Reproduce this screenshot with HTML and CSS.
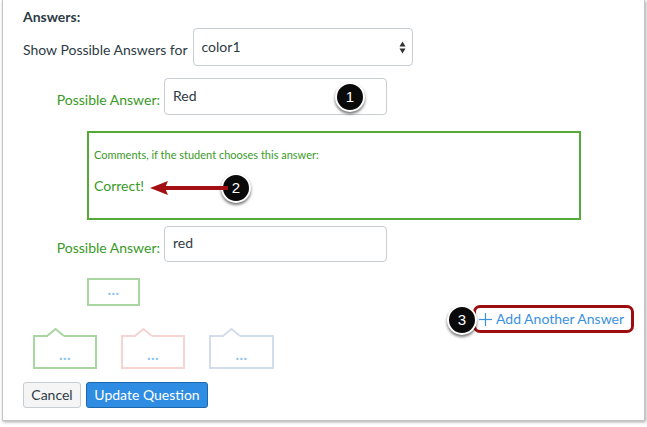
FILE: index.html
```html
<!DOCTYPE html>
<html>
<head>
<meta charset="utf-8">
<link rel="stylesheet" href="styles.css">
</head>
<body>
<div class="frame">
  <div class="title">Answers:</div>
  <div class="show-row">
    <span class="show-label">Show Possible Answers for</span>
    <div class="select">
      <span>color1</span>
      <svg class="sel-arrows" width="7" height="13" viewBox="0 0 7 13"><polygon points="0.5,5.5 3.5,0.5 6.5,5.5" fill="#333"/><polygon points="0.5,7.5 3.5,12.5 6.5,7.5" fill="#333"/></svg>
    </div>
  </div>
  <div class="answer-row first">
    <span class="answer-label">Possible Answer:</span>
    <input class="answer-input" type="text" value="Red">
  </div>
  <div class="comment-box">
    <div class="comment-title">Comments, if the student chooses this answer:</div>
    <div class="comment-text">Correct!</div>
  </div>
  <div class="answer-row second">
    <span class="answer-label">Possible Answer:</span>
    <input class="answer-input" type="text" value="red">
  </div>
  <div class="lower">
    <div class="lower-left">
      <div class="small-box">...</div>
      <div class="notch-row">
        <div class="nbox green"><svg class="notch" width="20" height="10" viewBox="0 0 20 10"><rect x="2" y="7" width="16" height="3" fill="#fff"/><polyline points="1,8 9.5,1 18,8" fill="#fff" stroke="#a9d5a1" stroke-width="2"/></svg>...</div>
        <div class="nbox pink"><svg class="notch" width="20" height="10" viewBox="0 0 20 10"><rect x="2" y="7" width="16" height="3" fill="#fff"/><polyline points="1,8 9.5,1 18,8" fill="#fff" stroke="#f7d3d3" stroke-width="2"/></svg>...</div>
        <div class="nbox blue"><svg class="notch" width="20" height="10" viewBox="0 0 20 10"><rect x="2" y="7" width="16" height="3" fill="#fff"/><polyline points="1,8 9.5,1 18,8" fill="#fff" stroke="#d3dcec" stroke-width="2"/></svg>...</div>
      </div>
    </div>
    <div class="add-answer">
      <svg class="plus" width="13" height="13" viewBox="0 0 13 13"><line x1="6.5" y1="0" x2="6.5" y2="13" stroke="#3a91df" stroke-width="1.2"/><line x1="0" y1="6.5" x2="13" y2="6.5" stroke="#3a91df" stroke-width="1.2"/></svg>
      <span>Add Another Answer</span>
    </div>
  </div>
  <div class="buttons">
    <button class="btn cancel">Cancel</button>
    <button class="btn primary">Update Question</button>
  </div>

  <div class="badge b1">1</div>
  <div class="badge b2">2</div>
  <div class="badge b3">3</div>
  <svg class="arrow" width="78" height="14" viewBox="0 0 78 14"><rect x="14" y="5" width="64" height="4" fill="#a30f12"/><polygon points="0,7 18,0 15,7 18,14" fill="#a30f12"/></svg>
</div>
</body>
</html>
```
FILE: styles.css
```css
* { box-sizing: border-box; }
html, body { margin: 0; padding: 0; background: #fff; }
body {
  font-family: Lato, "Liberation Sans", sans-serif;
  color: #2d3b45;
  width: 647px;
  height: 427px;
  overflow: hidden;
}
.frame {
  position: relative;
  margin-left: 2px;
  width: 643px;
  height: 421px;
  border: 1px solid #c4c4c4;
  border-top: none;
  box-shadow: 1px 1px 3px rgba(0,0,0,0.35);
  padding: 7px 10px 0 20px;
  background: #fff;
}
.title {
  font-weight: 700;
  font-size: 14px;
  line-height: 20px;
  height: 20px;
}
.show-row {
  margin-top: 1px;
  display: flex;
  align-items: center;
  height: 38px;
}
.show-label {
  font-size: 14px;
  line-height: 18px;
  padding-top: 5px;
  margin-right: 5px;
}
.select {
  width: 220px;
  height: 38px;
  border: 1px solid #c7cdd1;
  border-radius: 4px;
  display: flex;
  align-items: center;
  justify-content: space-between;
  padding: 0 6px 0 8px;
  font-size: 14px;
}
.select span { padding-bottom: 2px; }
.answer-row {
  display: flex;
  align-items: center;
}
.answer-row.first { margin-top: 12px; height: 37px; }
.answer-row.second { margin-top: 6px; height: 36px; }
.answer-label {
  width: 137px;
  text-align: right;
  color: #399a27;
  font-size: 14px;
  line-height: 18px;
  padding-top: 7px;
  margin-right: 4px;
}
.answer-input {
  width: 223px;
  height: 100%;
  border: 1px solid #c7cdd1;
  border-radius: 4px;
  font-family: Lato, "Liberation Sans", sans-serif;
  font-size: 14px;
  color: #2d3b45;
  padding: 0 8px 3px 8px;
  margin: 0;
  outline: none;
  background: #fff;
}
.comment-box {
  margin: 16px 0 0 64px;
  width: 494px;
  height: 89px;
  border: 2px solid #55a939;
  padding: 14px 0 0 5px;
  color: #399a27;
}
.comment-title {
  font-size: 11px;
  line-height: 15px;
}
.comment-text {
  margin-top: 15px;
  font-size: 14px;
  line-height: 18px;
}
.lower {
  margin-top: 16px;
  display: flex;
  align-items: flex-start;
}
.lower-left {
  display: flex;
  flex-direction: column;
}
.small-box {
  margin-left: 64px;
  width: 53px;
  height: 28px;
  border: 2px solid #a9d5a1;
  color: #8cc4f0;
  font-size: 15px;
  font-weight: 700;
  letter-spacing: 0.5px;
  line-height: 18px;
  text-align: center;
}
.notch-row {
  display: flex;
  gap: 24px;
  margin: 29px 0 0 10px;
}
.nbox {
  position: relative;
  width: 64px;
  height: 34px;
  border: 2px solid;
  color: #8cc4f0;
  font-size: 15px;
  font-weight: 700;
  letter-spacing: 0.5px;
  line-height: 14px;
  text-align: center;
  padding-top: 10px;
}
.nbox.green { border-color: #a9d5a1; }
.nbox.pink { border-color: #f7d3d3; }
.nbox.blue { border-color: #d3dcec; width: 65px; }
.notch {
  position: absolute;
  top: -9px;
  left: 11px;
}
.add-answer {
  margin: 27px 0 0 auto;
  width: 161px;
  height: 28px;
  border: 3px solid #9c0d10;
  border-radius: 7px;
  display: flex;
  align-items: center;
  padding-left: 3px;
  color: #3a91df;
  font-size: 14px;
}
.plus { margin-right: 4px; }
.add-answer span { padding-bottom: 1px; }
.buttons {
  margin-top: 13px;
  display: flex;
  gap: 5px;
}
.btn {
  height: 26px;
  font-family: Lato, "Liberation Sans", sans-serif;
  font-size: 14px;
  border-radius: 3px;
  padding: 0;
  margin: 0;
  line-height: 22px;
}
.btn.cancel {
  width: 58px;
  background: #f5f5f5;
  border: 1px solid #c7cdd1;
  color: #2d3b45;
}
.btn.primary {
  width: 122px;
  background: #2e8ce3;
  border: 1px solid #1d67ab;
  color: #fff;
}
.badge {
  position: absolute;
  width: 30px;
  height: 30px;
  border-radius: 50%;
  background: #0a0a0a;
  border: 2px solid #fff;
  box-shadow: 0 2px 3px rgba(0,0,0,0.55);
  color: #fff;
  font-family: "Liberation Sans", Arial, sans-serif;
  font-size: 15px;
  line-height: 26px;
  text-align: center;
}
.b1 { left: 332px; top: 82px; }
.b2 { left: 218px; top: 173px; }
.b3 { left: 444px; top: 305px; }
.arrow {
  position: absolute;
  left: 147px;
  top: 181px;
}
```
